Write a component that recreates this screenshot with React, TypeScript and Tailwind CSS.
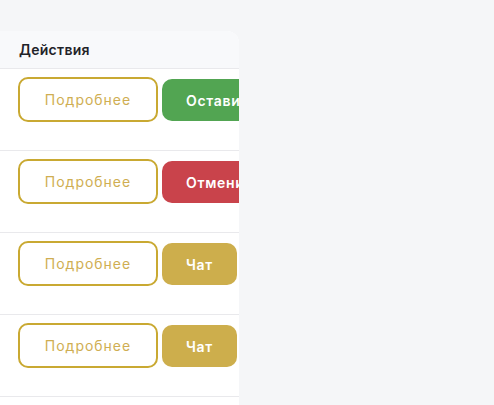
const rows = [
  { label: "Оставить отзыв", tone: "bg-[#52a552]" },
  { label: "Отменить", tone: "bg-[#c9434b]" },
  { label: "Чат", tone: "bg-[#cdae4c]" },
  { label: "Чат", tone: "bg-[#cdae4c]" },
]

export default function App() {
  return (
    <div className="h-[405px] overflow-hidden bg-[#f5f6f8] pt-[31px] font-['Inter',sans-serif]">
      <div className="w-[239px] overflow-hidden rounded-tr-xl bg-white pb-10">
        <div className="flex h-[38px] items-center border-b border-[#e9e9ec] bg-[#f8f9fb] px-[19px] text-[14px] font-semibold tracking-[0.02em] text-[#1f2329]">
          Действия
        </div>
        {rows.map((row, i) => (
          <div key={i} className="flex h-[82px] items-start gap-1 border-b border-[#e9e9ec] pl-[18px] pt-[8px]">
            <button className="flex h-[45px] w-[140px] shrink-0 items-center justify-center rounded-[10px] border-2 border-[#c9a932] text-[14px] tracking-[0.07em] text-[#cfae52]">
              Подробнее
            </button>
            <button
              className={`mt-[2px] flex h-[42px] shrink-0 items-center whitespace-nowrap rounded-[10px] px-6 text-[14px] font-semibold tracking-[0.05em] text-white ${row.tone}`}
            >
              {row.label}
            </button>
          </div>
        ))}
      </div>
    </div>
  )
}
